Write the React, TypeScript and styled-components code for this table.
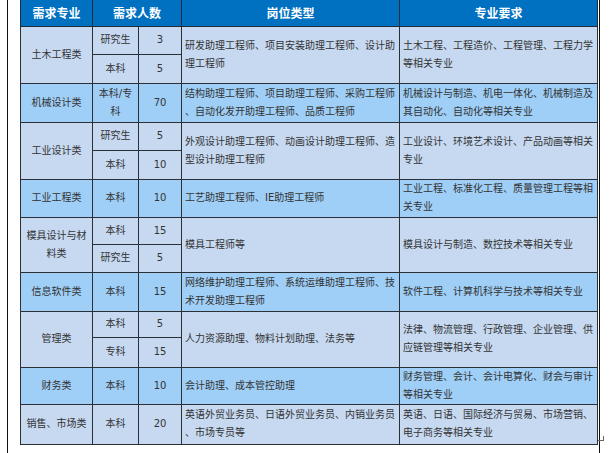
import React from 'react';
import styled, { createGlobalStyle } from 'styled-components';

const GlobalStyle = createGlobalStyle`
  html, body {
    margin: 0;
    padding: 0;
    background: #fff;
  }
`;

const Page = styled.div`
  position: relative;
  box-sizing: border-box;
  margin-left: 7px;
  width: 593px;
  height: 453px;
  padding-left: 12px;
  border-left: 1px solid #111;
  border-right: 1px solid #111;
`;

const Table = styled.table`
  width: 577px;
  table-layout: fixed;
  border-collapse: collapse;
  font-family: 'DejaVu Sans', 'Noto Sans CJK SC', sans-serif;
  font-size: 10px;
  color: #333;
`;

const Row = styled.tr<{ $h: number; $tone?: 'light' | 'blue' }>`
  height: ${(p) => p.$h}px;
  background: ${(p) => (p.$tone === 'blue' ? '#9fcff7' : '#c6d9f1')};
`;

const HeadRow = styled.tr`
  height: 26px;
  background: #0070c0;
`;

const HeadCell = styled.th`
  padding: 0;
  border: 1px solid #1d2b3a;
  border-top: 0;
  color: #fff;
  font-family: 'Noto Sans CJK SC', sans-serif;
  font-size: 12px;
  font-weight: 700;
  text-align: center;
  vertical-align: middle;
`;

const Cell = styled.td<{ $align?: 'left' | 'center' }>`
  padding: 0 ${(p) => (p.$align === 'left' ? '2px 0 3px' : '0')};
  border: 1px solid #2b2f36;
  line-height: 18px;
  text-align: ${(p) => p.$align ?? 'center'};
  vertical-align: middle;
  white-space: nowrap;
  overflow: hidden;
`;

const EndMark = styled.span`
  position: absolute;
  left: 590px;
  top: 436px;
  width: 5px;
  height: 4px;
  border-right: 1px solid #666;
  border-bottom: 1px solid #666;
`;

type Sub = { level: string[]; count: string; h: number };
type Group = {
  major: string[];
  tone: 'light' | 'blue';
  subs: Sub[];
  posts: string[];
  reqs: string[];
};

const groups: Group[] = [
  {
    major: ['土木工程类'],
    tone: 'light',
    subs: [
      { level: ['研究生'], count: '3', h: 28 },
      { level: ['本科'], count: '5', h: 29 },
    ],
    posts: ['研发助理工程师、项目安装助理工程师、设计助', '理工程师'],
    reqs: ['土木工程、工程造价、工程管理、工程力学', '等相关专业'],
  },
  {
    major: ['机械设计类'],
    tone: 'blue',
    subs: [{ level: ['本科/专', '科'], count: '70', h: 39 }],
    posts: ['结构助理工程师、项目助理工程师、采购工程师', '、自动化发开助理工程师、品质工程师'],
    reqs: ['机械设计与制造、机电一体化、机械制造及', '其自动化、自动化等相关专业'],
  },
  {
    major: ['工业设计类'],
    tone: 'light',
    subs: [
      { level: ['研究生'], count: '5', h: 28 },
      { level: ['本科'], count: '10', h: 29 },
    ],
    posts: ['外观设计助理工程师、动画设计助理工程师、造', '型设计助理工程师'],
    reqs: ['工业设计、环境艺术设计、产品动画等相关', '专业'],
  },
  {
    major: ['工业工程类'],
    tone: 'blue',
    subs: [{ level: ['本科'], count: '10', h: 38 }],
    posts: ['工艺助理工程师、IE助理工程师'],
    reqs: ['工业工程、标准化工程、质量管理工程等相', '关专业'],
  },
  {
    major: ['模具设计与材', '料类'],
    tone: 'light',
    subs: [
      { level: ['本科'], count: '15', h: 27 },
      { level: ['研究生'], count: '5', h: 28 },
    ],
    posts: ['模具工程师等'],
    reqs: ['模具设计与制造、数控技术等相关专业'],
  },
  {
    major: ['信息软件类'],
    tone: 'blue',
    subs: [{ level: ['本科'], count: '15', h: 39 }],
    posts: ['网络维护助理工程师、系统运维助理工程师、技', '术开发助理工程师'],
    reqs: ['软件工程、计算机科学与技术等相关专业'],
  },
  {
    major: ['管理类'],
    tone: 'light',
    subs: [
      { level: ['本科'], count: '5', h: 26 },
      { level: ['专科'], count: '15', h: 30 },
    ],
    posts: ['人力资源助理、物料计划助理、法务等'],
    reqs: ['法律、物流管理、行政管理、企业管理、供', '应链管理等相关专业'],
  },
  {
    major: ['财务类'],
    tone: 'blue',
    subs: [{ level: ['本科'], count: '10', h: 36 }],
    posts: ['会计助理、成本管控助理'],
    reqs: ['财务管理、会计、会计电算化、财会与审计', '等相关专业'],
  },
  {
    major: ['销售、市场类'],
    tone: 'light',
    subs: [{ level: ['本科'], count: '20', h: 40 }],
    posts: ['英语外贸业务员、日语外贸业务员、内销业务员', '、市场专员等'],
    reqs: ['英语、日语、国际经济与贸易、市场营销、', '电子商务等相关专业'],
  },
];

function Lines({ lines }: { lines: string[] }) {
  return (
    <>
      {lines.map((l, i) => (
        <React.Fragment key={i}>
          {i > 0 && <br />}
          {l}
        </React.Fragment>
      ))}
    </>
  );
}

export default function App() {
  return (
    <>
      <GlobalStyle />
      <Page>
        <Table>
          <colgroup>
            <col style={{ width: 72 }} />
            <col style={{ width: 46 }} />
            <col style={{ width: 43 }} />
            <col style={{ width: 218 }} />
            <col style={{ width: 198 }} />
          </colgroup>
          <thead>
            <HeadRow>
              <HeadCell>需求专业</HeadCell>
              <HeadCell colSpan={2}>需求人数</HeadCell>
              <HeadCell>岗位类型</HeadCell>
              <HeadCell>专业要求</HeadCell>
            </HeadRow>
          </thead>
          <tbody>
            {groups.map((g) =>
              g.subs.map((s, i) => (
                <Row key={g.major.join('') + i} $h={s.h} $tone={g.tone}>
                  {i === 0 && (
                    <Cell rowSpan={g.subs.length}>
                      <Lines lines={g.major} />
                    </Cell>
                  )}
                  <Cell>
                    <Lines lines={s.level} />
                  </Cell>
                  <Cell>{s.count}</Cell>
                  {i === 0 && (
                    <>
                      <Cell $align="left" rowSpan={g.subs.length}>
                        <Lines lines={g.posts} />
                      </Cell>
                      <Cell $align="left" rowSpan={g.subs.length}>
                        <Lines lines={g.reqs} />
                      </Cell>
                    </>
                  )}
                </Row>
              ))
            )}
          </tbody>
        </Table>
        <EndMark />
      </Page>
    </>
  );
}
